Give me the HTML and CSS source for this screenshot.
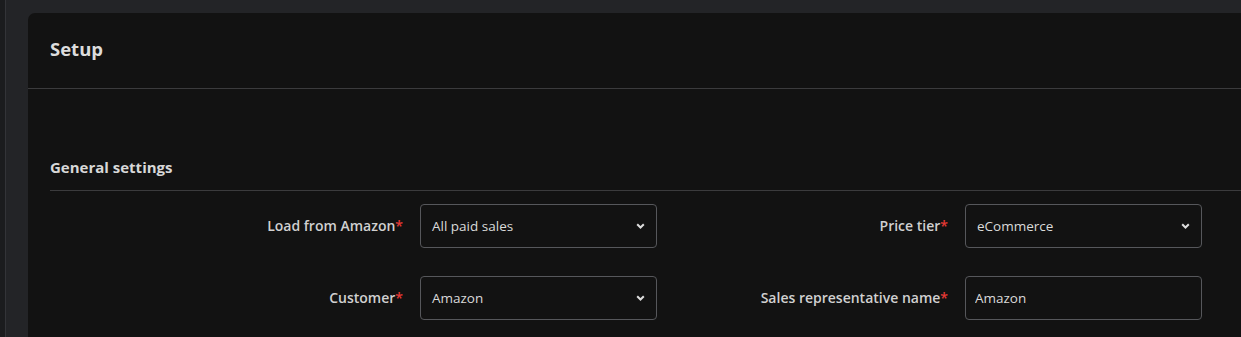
FILE: index.html
```html
<!DOCTYPE html>
<html>
<head>
    <meta charset="utf-8" />
    <title>Setup</title>
    <link rel="stylesheet" href="styles.css">
</head>
<body>
    <div class="seitenleiste"></div>
    <main class="inhalt">
        <section class="karte">
            <header class="karte-kopf">
                <h1>Setup</h1>
            </header>
            <div class="karte-koerper">
                <h2 class="abschnitt">General settings</h2>
                <div class="formular">
                    <label class="feld-name" for="laden">Load from Amazon<span class="pflicht">*</span></label>
                    <div class="auswahl" id="laden">
                        <span>All paid sales</span>
                        <svg width="9" height="6" viewBox="0 0 9 6"><path d="M1.2 1.2 L4.5 4.5 L7.8 1.2" fill="none" stroke="#ddd" stroke-width="2"/></svg>
                    </div>
                    <label class="feld-name" for="preis">Price tier<span class="pflicht">*</span></label>
                    <div class="auswahl" id="preis">
                        <span>eCommerce</span>
                        <svg width="9" height="6" viewBox="0 0 9 6"><path d="M1.2 1.2 L4.5 4.5 L7.8 1.2" fill="none" stroke="#ddd" stroke-width="2"/></svg>
                    </div>
                    <label class="feld-name" for="kunde">Customer<span class="pflicht">*</span></label>
                    <div class="auswahl" id="kunde">
                        <span>Amazon</span>
                        <svg width="9" height="6" viewBox="0 0 9 6"><path d="M1.2 1.2 L4.5 4.5 L7.8 1.2" fill="none" stroke="#ddd" stroke-width="2"/></svg>
                    </div>
                    <label class="feld-name" for="vertreter">Sales representative name<span class="pflicht">*</span></label>
                    <input class="eingabe" id="vertreter" type="text" value="Amazon" />
                </div>
            </div>
        </section>
    </main>
</body>
</html>
```

FILE: styles.css
```css
body {
    margin: 0;
    background-color: #232427;
    font-family: "Open Sans", "Liberation Sans", sans-serif;
    color: #d6d6d6;
    display: flex;
    height: 337px;
    overflow: hidden;
}

.seitenleiste {
    width: 5px;
    background-color: #1b1c1e;
    border-right: 1px solid #333438;
    flex-shrink: 0;
}

.inhalt {
    flex: 1;
    padding: 13px 0 0 22px;
    overflow: hidden;
}

.karte {
    background-color: #121212;
    border-radius: 7px 0 0 0;
    height: 100%;
    width: 1300px;
}

.karte-kopf {
    height: 75px;
    border-bottom: 1px solid #3b3b3d;
    padding-left: 22px;
    display: flex;
    align-items: center;
}

.karte-kopf h1 {
    margin: 0 0 4px 0;
    font-size: 18.5px;
    font-weight: 700;
    color: #dcdcdc;
}

.karte-koerper {
    padding: 68px 0 0 22px;
}

.abschnitt {
    margin: 0;
    font-size: 15px;
    font-weight: 700;
    color: #d8d8d8;
    line-height: 20px;
    padding-bottom: 13px;
    border-bottom: 1px solid #3b3b3d;
}

.formular {
    display: grid;
    grid-template-columns: 353px 237px 274px 237px;
    column-gap: 17px;
    row-gap: 28px;
    margin-top: 13px;
    align-items: center;
}

.feld-name {
    text-align: right;
    font-size: 14px;
    font-weight: 600;
    color: #d0d0d0;
    padding-bottom: 2px;
}

.pflicht {
    color: #e53935;
}

.auswahl, .eingabe {
    box-sizing: border-box;
    height: 44px;
    border: 1px solid #56575b;
    border-radius: 4px;
    background-color: #121212;
    font-family: "Open Sans", "Liberation Sans", sans-serif;
    font-size: 13.5px;
    color: #dadada;
}

.auswahl {
    display: flex;
    align-items: center;
    justify-content: space-between;
    padding: 0 11px 0 11px;
}

.eingabe {
    padding: 0 9px;
    width: 237px;
    outline: none;
}
```
